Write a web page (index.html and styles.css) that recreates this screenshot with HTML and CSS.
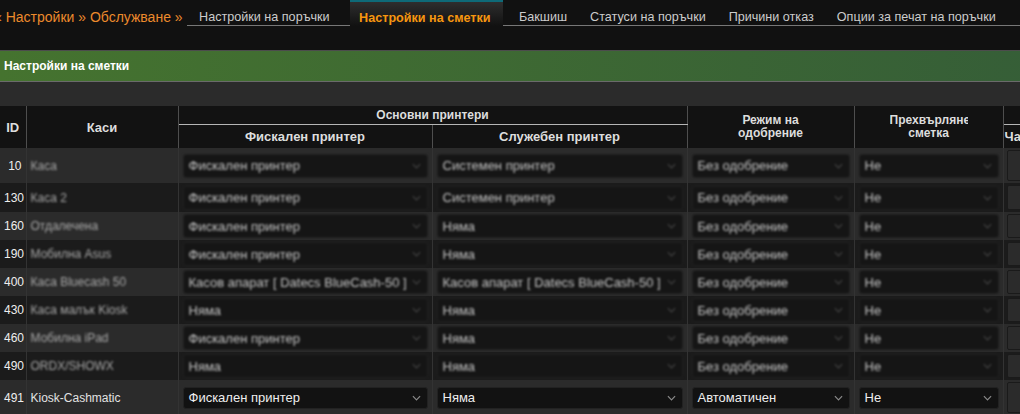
FILE: index.html
```html
<!DOCTYPE html>
<html lang="bg">
<head>
    <meta charset="UTF-8">
    <title>Настройки на сметки</title>
    <link rel="stylesheet" href="styles.css">
</head>
<body>
    <div class="topbar">
        <span class="crumbs">« Настройки » Обслужване »</span>
        <nav class="tabs">
            <a class="tab" href="#">Настройки на поръчки</a>
            <a class="tab active" href="#">Настройки на сметки</a>
            <a class="tab" href="#">Бакшиш</a>
            <a class="tab" href="#">Статуси на поръчки</a>
            <a class="tab" href="#">Причини отказ</a>
            <a class="tab" href="#">Опции за печат на поръчки</a>
        </nav>
    </div>

    <div class="panel-title">Настройки на сметки</div>
    <div class="toolbar"></div>

    <table class="grid">
        <colgroup>
            <col style="width:26px">
            <col style="width:152px">
            <col style="width:254px">
            <col style="width:255px">
            <col style="width:167px">
            <col style="width:149px">
            <col style="width:130px">
        </colgroup>
        <thead>
            <tr class="head-top">
                <th rowspan="2" class="big-head">ID</th>
                <th rowspan="2" class="big-head">Каси</th>
                <th colspan="2" class="group">Основни принтери</th>
                <th rowspan="2" class="two-line">Режим на<br>одобрение</th>
                <th rowspan="2" class="two-line"><div class="clip">Прехвърляне</div>сметка</th>
                <th class="group"></th>
            </tr>
            <tr class="head-sub">
                <th>Фискален принтер</th>
                <th>Служебен принтер</th>
                <th class="cut">Частично</th>
            </tr>
        </thead>
        <tbody>
            <tr class="odd blurred">
                <td class="id">10</td>
                <td><span class="name">Каса</span></td>
                <td><div class="select"><span>Фискален принтер</span><svg viewBox="0 0 10 6"><polyline points="1,1 5,5 9,1"/></svg></div></td>
                <td><div class="select"><span>Системен принтер</span><svg viewBox="0 0 10 6"><polyline points="1,1 5,5 9,1"/></svg></div></td>
                <td><div class="select"><span>Без одобрение</span><svg viewBox="0 0 10 6"><polyline points="1,1 5,5 9,1"/></svg></div></td>
                <td><div class="select"><span>Не</span><svg viewBox="0 0 10 6"><polyline points="1,1 5,5 9,1"/></svg></div></td>
                <td><div class="box tall"></div></td>
            </tr>
            <tr class="even blurred">
                <td class="id">130</td>
                <td><span class="name">Каса 2</span></td>
                <td><div class="select"><span>Фискален принтер</span><svg viewBox="0 0 10 6"><polyline points="1,1 5,5 9,1"/></svg></div></td>
                <td><div class="select"><span>Системен принтер</span><svg viewBox="0 0 10 6"><polyline points="1,1 5,5 9,1"/></svg></div></td>
                <td><div class="select"><span>Без одобрение</span><svg viewBox="0 0 10 6"><polyline points="1,1 5,5 9,1"/></svg></div></td>
                <td><div class="select"><span>Не</span><svg viewBox="0 0 10 6"><polyline points="1,1 5,5 9,1"/></svg></div></td>
                <td><div class="box mid"></div></td>
            </tr>
            <tr class="odd blurred">
                <td class="id">160</td>
                <td><span class="name">Отдалечена</span></td>
                <td><div class="select"><span>Фискален принтер</span><svg viewBox="0 0 10 6"><polyline points="1,1 5,5 9,1"/></svg></div></td>
                <td><div class="select"><span>Няма</span><svg viewBox="0 0 10 6"><polyline points="1,1 5,5 9,1"/></svg></div></td>
                <td><div class="select"><span>Без одобрение</span><svg viewBox="0 0 10 6"><polyline points="1,1 5,5 9,1"/></svg></div></td>
                <td><div class="select"><span>Не</span><svg viewBox="0 0 10 6"><polyline points="1,1 5,5 9,1"/></svg></div></td>
                <td><div class="box"></div></td>
            </tr>
            <tr class="even blurred">
                <td class="id">190</td>
                <td><span class="name">Мобилна Asus</span></td>
                <td><div class="select"><span>Фискален принтер</span><svg viewBox="0 0 10 6"><polyline points="1,1 5,5 9,1"/></svg></div></td>
                <td><div class="select"><span>Няма</span><svg viewBox="0 0 10 6"><polyline points="1,1 5,5 9,1"/></svg></div></td>
                <td><div class="select"><span>Без одобрение</span><svg viewBox="0 0 10 6"><polyline points="1,1 5,5 9,1"/></svg></div></td>
                <td><div class="select"><span>Не</span><svg viewBox="0 0 10 6"><polyline points="1,1 5,5 9,1"/></svg></div></td>
                <td><div class="box"></div></td>
            </tr>
            <tr class="odd blurred">
                <td class="id">400</td>
                <td><span class="name">Каса Bluecash 50</span></td>
                <td><div class="select"><span>Касов апарат [ Datecs BlueCash-50 ]</span><svg viewBox="0 0 10 6"><polyline points="1,1 5,5 9,1"/></svg></div></td>
                <td><div class="select"><span>Касов апарат [ Datecs BlueCash-50 ]</span><svg viewBox="0 0 10 6"><polyline points="1,1 5,5 9,1"/></svg></div></td>
                <td><div class="select"><span>Без одобрение</span><svg viewBox="0 0 10 6"><polyline points="1,1 5,5 9,1"/></svg></div></td>
                <td><div class="select"><span>Не</span><svg viewBox="0 0 10 6"><polyline points="1,1 5,5 9,1"/></svg></div></td>
                <td><div class="box"></div></td>
            </tr>
            <tr class="even blurred">
                <td class="id">430</td>
                <td><span class="name">Каса малък Kiosk</span></td>
                <td><div class="select"><span>Няма</span><svg viewBox="0 0 10 6"><polyline points="1,1 5,5 9,1"/></svg></div></td>
                <td><div class="select"><span>Няма</span><svg viewBox="0 0 10 6"><polyline points="1,1 5,5 9,1"/></svg></div></td>
                <td><div class="select"><span>Без одобрение</span><svg viewBox="0 0 10 6"><polyline points="1,1 5,5 9,1"/></svg></div></td>
                <td><div class="select"><span>Не</span><svg viewBox="0 0 10 6"><polyline points="1,1 5,5 9,1"/></svg></div></td>
                <td><div class="box"></div></td>
            </tr>
            <tr class="odd blurred">
                <td class="id">460</td>
                <td><span class="name">Мобилна iPad</span></td>
                <td><div class="select"><span>Фискален принтер</span><svg viewBox="0 0 10 6"><polyline points="1,1 5,5 9,1"/></svg></div></td>
                <td><div class="select"><span>Няма</span><svg viewBox="0 0 10 6"><polyline points="1,1 5,5 9,1"/></svg></div></td>
                <td><div class="select"><span>Без одобрение</span><svg viewBox="0 0 10 6"><polyline points="1,1 5,5 9,1"/></svg></div></td>
                <td><div class="select"><span>Не</span><svg viewBox="0 0 10 6"><polyline points="1,1 5,5 9,1"/></svg></div></td>
                <td><div class="box"></div></td>
            </tr>
            <tr class="even blurred">
                <td class="id">490</td>
                <td><span class="name">ORDX/SHOWX</span></td>
                <td><div class="select"><span>Няма</span><svg viewBox="0 0 10 6"><polyline points="1,1 5,5 9,1"/></svg></div></td>
                <td><div class="select"><span>Няма</span><svg viewBox="0 0 10 6"><polyline points="1,1 5,5 9,1"/></svg></div></td>
                <td><div class="select"><span>Без одобрение</span><svg viewBox="0 0 10 6"><polyline points="1,1 5,5 9,1"/></svg></div></td>
                <td><div class="select"><span>Не</span><svg viewBox="0 0 10 6"><polyline points="1,1 5,5 9,1"/></svg></div></td>
                <td><div class="box"></div></td>
            </tr>
            <tr class="odd">
                <td class="id">491</td>
                <td><span class="name">Kiosk-Cashmatic</span></td>
                <td><div class="select"><span>Фискален принтер</span><svg viewBox="0 0 10 6"><polyline points="1,1 5,5 9,1"/></svg></div></td>
                <td><div class="select"><span>Няма</span><svg viewBox="0 0 10 6"><polyline points="1,1 5,5 9,1"/></svg></div></td>
                <td><div class="select"><span>Автоматичен</span><svg viewBox="0 0 10 6"><polyline points="1,1 5,5 9,1"/></svg></div></td>
                <td><div class="select"><span>Не</span><svg viewBox="0 0 10 6"><polyline points="1,1 5,5 9,1"/></svg></div></td>
                <td><div class="box big"></div></td>
            </tr>
        </tbody>
    </table>
</body>
</html>
```

FILE: styles.css
```css
html, body {
    margin: 0;
    background-color: #111;
    overflow: hidden;
}
body {
    font-family: "Liberation Sans", Arial, sans-serif;
    font-size: 12px;
    color: #ddd;
    width: 1140px;
}

/* top navigation */
.topbar {
    display: flex;
    align-items: flex-end;
    height: 26px;
    margin-left: -6px;
}
.crumbs {
    color: #ec8a2c;
    font-size: 14px;
    line-height: 18px;
    margin-right: 4px;
}
.tabs {
    flex: 1;
    display: flex;
    align-items: flex-end;
    height: 26px;
    box-sizing: border-box;
    border-bottom: 1px solid #777;
    padding-left: 1px;
}
.tab {
    color: #ccc;
    text-decoration: none;
    font-size: 12.6px;
    line-height: 15px;
    padding: 0 11.5px;
}
.tab.active {
    color: #f7960f;
    font-weight: bold;
    height: 26px;
    box-sizing: border-box;
    line-height: 16px;
    padding: 8px 12px 0 9px;
    margin: 0 5px -1px 9px;
    border-top: 2px solid #0e6a78;
    background: linear-gradient(to bottom, #2e2e2e, #111);
}

/* green title bar */
.panel-title {
    margin-top: 24px;
    height: 30px;
    line-height: 30px;
    padding-left: 4px;
    color: #fff;
    font-weight: bold;
    background: linear-gradient(to right, #45732f, #345c38);
    border-top: 1px solid #4c4c4c;
    border-bottom: 1px solid #6a6a6a;
}
.toolbar {
    height: 24px;
    background-color: #2b2b2b;
}

/* table */
.grid {
    border-collapse: collapse;
    table-layout: fixed;
    width: 1133px;
}
.grid th {
    background-color: #121212;
    color: #ddd;
    font-weight: bold;
    font-size: 12px;
    border-right: 1px solid #4e4e4e;
    padding: 0 4px;
    text-align: center;
}
.head-top th {
    height: 18px;
}
.head-sub th {
    height: 23px;
    font-size: 13px;
}
.grid th.big-head {
    font-size: 13px;
}
.grid th.group {
    border-bottom: 1px solid #b5b5b5;
}
.two-line {
    line-height: 13px;
}
.clip {
    width: 78px;
    margin: 0 auto;
    overflow: hidden;
    white-space: nowrap;
}
.grid th.cut {
    text-align: left;
    padding-left: 1px;
}

.grid td {
    padding: 2px 4px;
    border-right: 1px solid #333;
    vertical-align: middle;
}
.odd td {
    background-color: #2b2b2b;
}
.even td {
    background-color: #1b1b1b;
}
.grid td.id {
    text-align: right;
    padding-right: 4px;
    color: #eee;
}
.name {
    color: #e2e2e2;
    white-space: nowrap;
}
.select {
    display: flex;
    align-items: center;
    justify-content: space-between;
    height: 20px;
    padding: 0 6px 0 5px;
    background-color: #121212;
    border: 1px solid #222;
    border-radius: 3px;
    color: #eee;
    font-size: 13px;
    white-space: nowrap;
    overflow: hidden;
}
.select svg {
    width: 9px;
    height: 6px;
    flex-shrink: 0;
    fill: none;
    stroke: #8a8a8a;
    stroke-width: 1.3;
}
.blurred .select {
    height: 22px;
    color: #c4c4c4;
    background-color: #151515;
    filter: blur(1.2px);
}
.blurred .select svg {
    stroke: #444;
}
.blurred .name {
    display: inline-block;
    color: #a8a8a8;
    filter: blur(1.1px);
}
.box {
    height: 24px;
    box-sizing: border-box;
    margin-left: -1px;
    background-color: #2b2b2b;
    border: 1px solid #1a1a1a;
    border-radius: 2px;
}
.box.tall {
    height: 31px;
}
.box.mid {
    height: 25px;
}
.box.big {
    height: 31px;
}
```
